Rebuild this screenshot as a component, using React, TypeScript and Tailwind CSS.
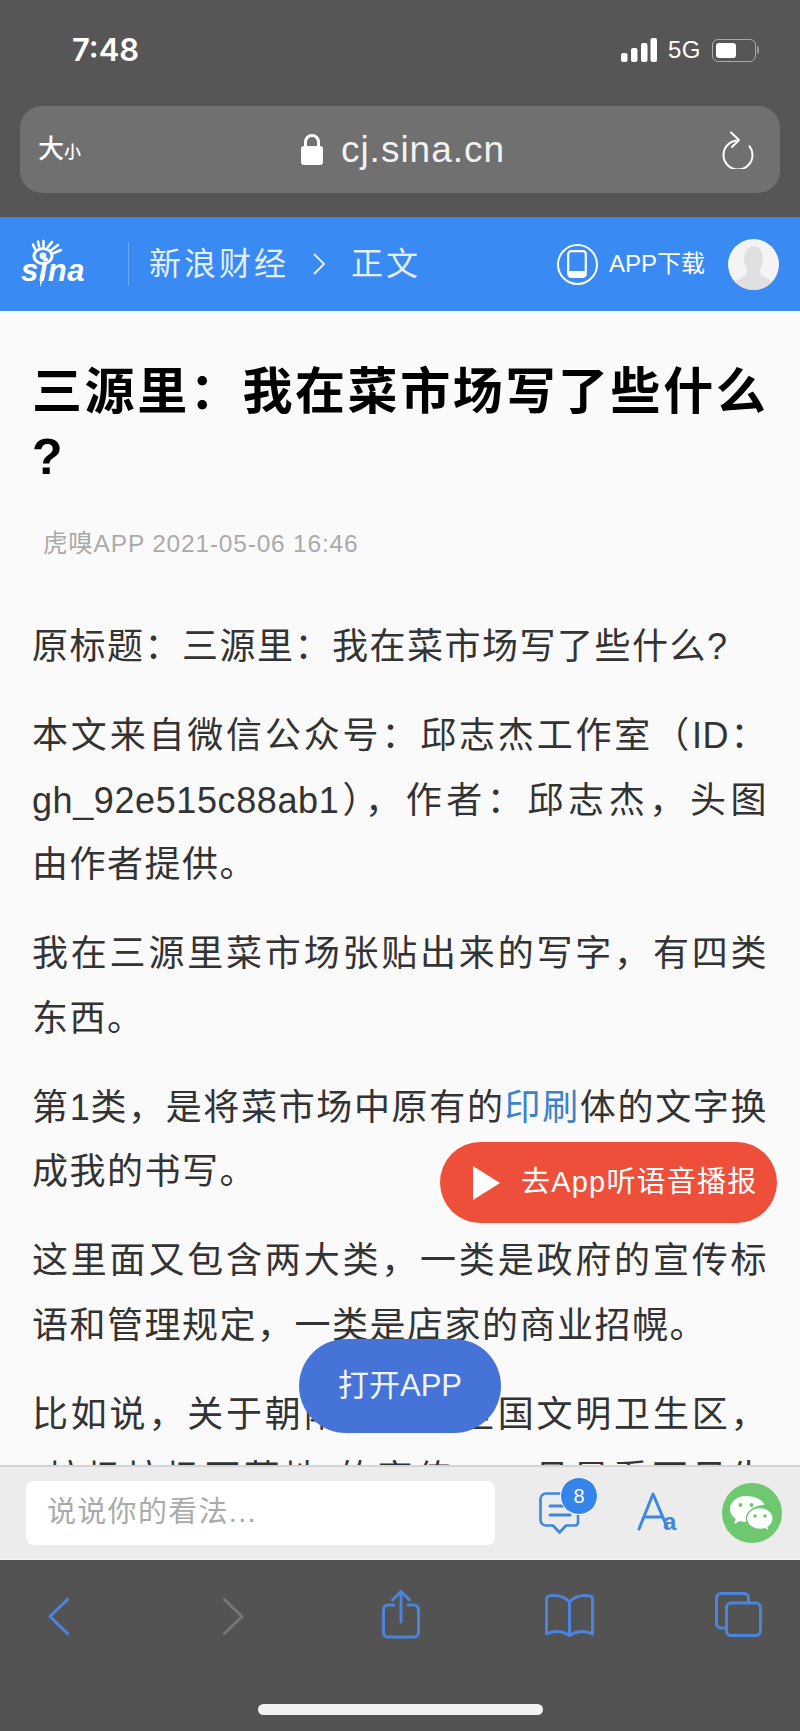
import React from "react";

const sans = "font-['Liberation_Sans','Noto_Sans_CJK_SC',sans-serif]";

function Signal() {
  return (
    <svg width="36" height="24" viewBox="0 0 36 24" fill="#fff">
      <rect x="0" y="15" width="6.500" height="9" rx="2" />
      <rect x="10" y="10" width="6.500" height="14" rx="2" />
      <rect x="20" y="5" width="6.500" height="19" rx="2" />
      <rect x="29.500" y="0" width="6.500" height="24" rx="2" />
    </svg>
  );
}

function Battery() {
  return (
    <div className="flex items-center">
      <div className="h-[23px] w-[44px] rounded-[6px] border border-[#a9a9a9] p-[3px]">
        <div className="h-full w-[20px] rounded-[3px] bg-white" />
      </div>
      <div className="ml-[1px] h-[8px] w-[2px] rounded-r bg-[#999]" />
    </div>
  );
}

function Lock() {
  return (
    <svg width="22" height="31" viewBox="0 0 22 31" fill="none">
      <path d="M4.500 14V8a6.500 6.500 0 0 1 13 0v6" stroke="#fff" strokeWidth="3" />
      <rect x="0" y="12" width="22" height="19" rx="3" fill="#fff" />
    </svg>
  );
}

function Reload() {
  return (
    <svg width="32" height="38" viewBox="0 0 32 38" fill="none" stroke="#fff" strokeWidth="2" strokeLinecap="round" strokeLinejoin="round">
      <path d="M16 9.500A14.500 14.500 0 1 0 30.500 24c0-3.500-1.200-6.400-3-8.800" />
      <path d="M9 1.500l8 7.500-7 7" />
    </svg>
  );
}

function PhoneIcon() {
  return (
    <div className="flex h-[41px] w-[41px] items-center justify-center rounded-full border-2 border-white">
      <svg width="20" height="28" viewBox="0 0 20 28" fill="none">
        <rect x="1.200" y="1.200" width="17.600" height="25.600" rx="3" stroke="#fff" strokeWidth="2.200" />
        <path d="M1.500 21h17v3a3 3 0 0 1-3 3h-11a3 3 0 0 1-3-3z" fill="#fff" />
      </svg>
    </div>
  );
}

function SinaLogo() {
  return (
    <div className="relative h-[46px] w-[64px] text-white">
      <svg className="absolute top-[-2px] left-[7px]" width="36" height="26" viewBox="0 0 36 26" fill="none" stroke="#fff" strokeLinecap="round">
        <ellipse cx="15" cy="17" rx="9" ry="7.500" strokeWidth="3" />
        <circle cx="15" cy="17" r="3.400" fill="#fff" strokeWidth="0" />
        <path d="M7 10L5 5.500M11 7.500L10 2.500M15.500 7V2M20 8L24 3M23.500 11L30 6M26 14L33 11" strokeWidth="2.600" />
      </svg>
      <span className="absolute top-[15px] left-0 font-['Liberation_Sans',sans-serif] text-[31px] leading-[30px] font-bold tracking-[0.5px] italic">sina</span>
      <svg className="absolute top-[34px] left-[17px]" width="8" height="12" viewBox="0 0 8 12" fill="#fff">
        <path d="M2 0h5L2 12z" />
      </svg>
    </div>
  );
}

function Avatar() {
  return (
    <div className="h-[51px] w-[51px] overflow-hidden rounded-full bg-[#f4f4f4]">
      <svg width="51" height="51" viewBox="0 0 51 51" fill="#e0e0e0">
        <ellipse cx="25.500" cy="20" rx="9.500" ry="13" />
        <path d="M19 30h13l1 6 10 6v9H8v-9l10-6z" />
      </svg>
    </div>
  );
}

function CommentIcon() {
  return (
    <div className="relative h-[42px] w-[41px]">
      <svg width="41" height="42" viewBox="0 0 41 42" fill="none" stroke="#3f86e0" strokeWidth="2.600" strokeLinecap="round" strokeLinejoin="round">
        <path d="M7 1.500h27a5 5 0 0 1 5 5v24a3 3 0 0 1-3 3h-9l-6.500 7-6.500-7H7a5.500 5.500 0 0 1-5.500-5.500V7A5.500 5.500 0 0 1 7 1.500z" />
        <path d="M11 14h14M11 23h20" strokeWidth="3" />
      </svg>
      <div className="absolute top-[-15px] left-[21px] flex h-[38px] w-[38px] items-center justify-center rounded-full border border-white bg-[#3584ea] font-['Liberation_Sans',sans-serif] text-[20px] text-white">
        8
      </div>
    </div>
  );
}

function FontIcon() {
  return (
    <div className="relative h-[42px] w-[38px]">
      <svg width="32" height="40" viewBox="0 0 32 40" fill="none" stroke="#3f86e0" strokeWidth="3" strokeLinecap="round" strokeLinejoin="round">
        <path d="M2 37L16 2l14 33M8 25h18" />
      </svg>
      <span className="absolute top-[15px] left-[26px] font-['Liberation_Sans',sans-serif] text-[24px] leading-[30px] font-bold text-[#3f86e0]">a</span>
    </div>
  );
}

function WeChat() {
  return (
    <svg width="60" height="60" viewBox="0 0 60 60">
      <circle cx="30" cy="30" r="30" fill="#6dc86f" />
      <path d="M24 13c-9 0-16 5.800-16 13 0 4 2.200 7.500 5.700 9.800L12 41l6-3c2 .6 3.800.9 6 .9 1 0 2-.1 3-.2-.5-1.300-.7-2.600-.7-4 0-7.300 6.800-12.700 15-12.700h1.200C40.600 16.700 33 13 24 13z" fill="#fff" />
      <circle cx="18.500" cy="22" r="2" fill="#6dc86f" />
      <circle cx="29.500" cy="22" r="2" fill="#6dc86f" />
      <g transform="translate(-3 0)">
        <path d="M41 24.500c-7.400 0-13.500 4.900-13.500 11s6.100 11 13.500 11c1.700 0 3.100-.3 4.700-.7l4.800 2.700-1.300-4.300c3-2.100 5-5.200 5-8.700 0-6.100-5.800-11-13.200-11z" fill="#fff" stroke="#6dc86f" strokeWidth="1.500" />
        <circle cx="36" cy="33" r="1.800" fill="#6dc86f" />
        <circle cx="46" cy="33" r="1.800" fill="#6dc86f" />
      </g>
    </svg>
  );
}

const blue = "#4b84dc";

function Chevron({ left, color }: { left?: boolean; color: string }) {
  return (
    <svg className="mt-[3px]" width="21" height="37" viewBox="0 0 21 37" fill="none" stroke={color} strokeWidth="3" strokeLinecap="round" strokeLinejoin="round">
      <path d={left ? "M19.500 1.500L2 18.500l17.500 17" : "M1.500 1.500L19 18.500l-17.500 17"} />
    </svg>
  );
}

function Share() {
  return (
    <svg width="38" height="49" viewBox="0 0 38 49" fill="none" stroke={blue} strokeWidth="3" strokeLinecap="round" strokeLinejoin="round">
      <path d="M12 15H6a4.500 4.500 0 0 0-4.500 4.500v23A4.500 4.500 0 0 0 6 47h26a4.500 4.500 0 0 0 4.500-4.500v-23A4.500 4.500 0 0 0 32 15h-6" />
      <path d="M19 32V2M10.500 10L19 1.500 27.500 10" />
    </svg>
  );
}

function Book() {
  return (
    <svg className="mt-[2px]" width="49" height="43" viewBox="0 0 49 43" fill="none" stroke={blue} strokeWidth="3" strokeLinecap="round" strokeLinejoin="round">
      <path d="M24.500 8C20.500 3.500 15 1.500 8.500 1.500c-2.500 0-5 .5-6.500 1.500-.4 1-.5 2-.5 3v34c5-2.800 14-4.500 23 1.500 9-6 18-4.300 23-1.500V6c0-1-.1-2-.5-3-1.500-1-4-1.500-6.500-1.500C34 1.500 28.500 3.500 24.500 8z" />
      <path d="M24.500 8v32" />
    </svg>
  );
}

function Tabs() {
  return (
    <svg width="47" height="45" viewBox="0 0 47 45" fill="none" stroke={blue} strokeWidth="3" strokeLinecap="round" strokeLinejoin="round">
      <path d="M11 36H6a4.500 4.500 0 0 1-4.500-4.500V6A4.500 4.500 0 0 1 6 1.500h23A4.500 4.500 0 0 1 33.500 6v5" />
      <rect x="11.500" y="11" width="34" height="32.500" rx="4.500" />
    </svg>
  );
}

function Para({ children }: { children: React.ReactNode }) {
  return <p className="mb-[24.500px] text-justify">{children}</p>;
}

function Latin({ children }: { children: React.ReactNode }) {
  return <span className="tracking-[0.6px]">{children}</span>;
}

export default function App() {
  return (
    <div lang="zh-CN" className={`relative flex h-[1731px] w-[800px] flex-col overflow-hidden bg-[#fafafa] ${sans}`}>
      <div className="h-[217px] shrink-0 bg-[#565656] text-white">
        <div className="flex h-[100px] items-center justify-between pr-[41px] pl-[72px]">
          <span className="font-['Inter',sans-serif] text-[31px] font-semibold">7:48</span>
          <div className="flex items-center">
            <Signal />
            <span className="mx-[11px] text-[24px] tracking-[0.5px]">5G</span>
            <Battery />
          </div>
        </div>
        <div className="mx-[20px] mt-[6px] flex h-[87px] items-center justify-between rounded-[22px] bg-[#707070] pr-[26px] pl-[18px]">
          <div className="flex w-[46px] items-baseline font-medium">
            <span className="text-[26px]">大</span>
            <span className="text-[17px]">小</span>
          </div>
          <div className="flex items-center gap-[18px]">
            <Lock />
            <span className="text-[37px] tracking-[1px] text-[#f2f2f2]">cj.sina.cn</span>
          </div>
          <Reload />
        </div>
      </div>

      <header className="flex h-[94px] shrink-0 items-center bg-[#3a8af3] px-[21px] text-[#e3eeff]">
        <SinaLogo />
        <div className="ml-[43px] h-[44px] w-px bg-[#6ea9f5]" />
        <span className="ml-[20px] text-[32px] tracking-[3px]">新浪财经</span>
        <svg className="ml-[23px]" width="14" height="24" viewBox="0 0 14 24" fill="none" stroke="#e3eeff" strokeWidth="2">
          <path d="M2 2l10 10L2 22" />
        </svg>
        <span className="ml-[25px] text-[32px] tracking-[3px]">正文</span>
        <div className="ml-auto flex items-center">
          <PhoneIcon />
          <span className="mr-[23px] ml-[11px] text-[24px] text-white">APP下载</span>
          <Avatar />
        </div>
      </header>

      <main className="min-h-0 flex-1 overflow-hidden px-[32px] pt-[49px]">
        <h1 className="text-[50px] leading-[65px] font-bold tracking-[2.600px] whitespace-nowrap text-black">
          {"三源里\uFF1A我在菜市场写了些什么"}
          <br />?
        </h1>
        <div className="mt-[39px] ml-[11px] text-[24.500px] leading-[30px] tracking-[0.800px] text-[#aaaaaa]">虎嗅APP 2021-05-06 16:46</div>
        <div className="mt-[56px] text-[36px] leading-[64.500px] tracking-[1.500px] text-[#333333]">
          <Para>{"原标题\uFF1A三源里\uFF1A我在菜市场写了些什么?"}</Para>
          <Para>
            {"本文来自微信公众号\uFF1A邱志杰工作室\uFF08"}
            <Latin>ID</Latin>
            {"\uFF1A"}
            <Latin>gh_92e515c88ab1</Latin>
            {"\uFF09\uFF0C作者\uFF1A邱志杰\uFF0C头图由作者提供。"}
          </Para>
          <Para>{"我在三源里菜市场张贴出来的写字\uFF0C有四类东西。"}</Para>
          <Para>
            第<Latin>1</Latin>
            {"类\uFF0C是将菜市场中原有的"}
            <span className="text-[#3b82c8]">印刷</span>
            体的文字换成我的书写。
          </Para>
          <Para>{"这里面又包含两大类\uFF0C一类是政府的宣传标语和管理规定\uFF0C一类是店家的商业招幌。"}</Para>
          <Para>{"比如说\uFF0C关于朝阳区创建全国文明卫生区\uFF0C“垃圾垃圾不落地”的宣传\uFF0C一旦是看不见生活"}</Para>
        </div>
      </main>

      <div className="flex h-[95px] shrink-0 items-center border-t-2 border-b border-t-[#d5d5d5] border-b-[#f5f5f5] bg-[#ececec] pr-[18px] pl-[26px]">
        <div className="flex h-[64px] w-[469px] items-center rounded-[8px] bg-white pl-[21px] text-[29px] tracking-[1.300px] text-[#aaaaaa]">说说你的看法...</div>
        <div className="ml-[44px]">
          <CommentIcon />
        </div>
        <div className="ml-[57px]">
          <FontIcon />
        </div>
        <div className="ml-auto">
          <WeChat />
        </div>
      </div>

      <div className="h-[171px] shrink-0 bg-[#535353] pt-[30px]">
        <div className="flex h-[49px] items-center pl-[48px]">
          <Chevron left color={blue} />
          <div className="ml-[154px]">
            <Chevron color="#767676" />
          </div>
          <div className="ml-[138px]">
            <Share />
          </div>
          <div className="ml-[125px]">
            <Book />
          </div>
          <div className="ml-[121px]">
            <Tabs />
          </div>
        </div>
        <div className="mx-auto mt-[65px] h-[11px] w-[285px] rounded-full bg-[#f2f2f2]" />
      </div>

      <div className="absolute top-[1142px] left-[440px] flex h-[81px] w-[337px] items-center rounded-full bg-[#ee4f3b] pl-[33px] text-white">
        <svg width="27" height="34" viewBox="0 0 27 34" fill="#fff">
          <path d="M0 0l27 17L0 34z" />
        </svg>
        <span className="ml-[21px] text-[29px] tracking-[1.200px] whitespace-nowrap">去App听语音播报</span>
      </div>

      <div className="absolute top-[1339px] left-[299px] flex h-[94px] w-[202px] items-center justify-center rounded-[47px] bg-[#4673d8] text-[31px] text-[#f0f4ff]">
        打开APP
      </div>
    </div>
  );
}
